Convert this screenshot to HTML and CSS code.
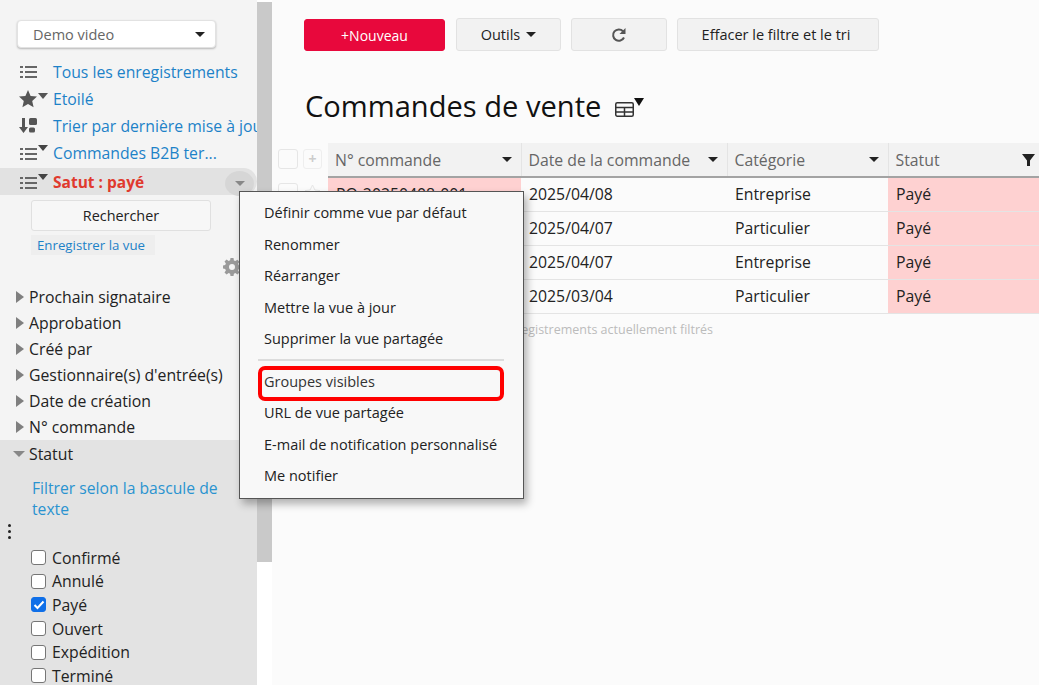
FILE: index.html
```html
<!DOCTYPE html>
<html lang="fr">
<head>
<meta charset="utf-8">
<title>Commandes de vente</title>
<link rel="stylesheet" href="styles.css">
</head>
<body>
<div class="app">
  <aside class="sidebar">
    <div class="select"><span>Demo video</span><i class="caret dark"></i></div>
    <ul class="views">
      <li class="view"><span class="vicon"><svg width="20" height="14" viewBox="0 0 20 14"><g fill="#666"><rect x="1" y="1" width="3" height="2"/><rect x="1" y="6" width="3" height="2"/><rect x="1" y="11" width="3" height="2"/><rect x="6" y="1" width="12" height="2"/><rect x="6" y="6" width="12" height="2"/><rect x="6" y="11" width="12" height="2"/></g></svg></span><a>Tous les enregistrements</a></li>
      <li class="view"><span class="vicon"><svg width="30" height="18" viewBox="0 0 30 18"><path fill="#555" d="M9 0l2.600 6 6.400.6-4.800 4.300 1.400 6.300L9 14l-5.600 3.200 1.400-6.300L0 6.600 6.400 6z"/><path fill="#555" d="M19 3h10l-5 6z"/></svg></span><a>Etoilé</a></li>
      <li class="view"><span class="vicon"><svg width="20" height="15" viewBox="0 0 20 15"><path fill="#555" d="M3 0h3v9h3l-4.500 6L0 9h3z"/><rect x="10" y="0" width="8" height="7" rx="1.500" fill="#555"/><rect x="10" y="9.500" width="6" height="5" rx="1.500" fill="#555"/></svg></span><a>Trier par dernière mise à jour</a></li>
      <li class="view"><span class="vicon"><svg width="30" height="16" viewBox="0 0 30 16"><g fill="#666"><rect x="1" y="3" width="3" height="2"/><rect x="1" y="8" width="3" height="2"/><rect x="1" y="13" width="3" height="2"/><rect x="6" y="3" width="12" height="2"/><rect x="6" y="8" width="12" height="2"/><rect x="6" y="13" width="12" height="2"/></g><path fill="#444" d="M19 0h10l-5 6z"/></svg></span><a>Commandes B2B ter...</a></li>
      <li class="view current"><span class="vicon"><svg width="30" height="16" viewBox="0 0 30 16"><g fill="#666"><rect x="1" y="3" width="3" height="2"/><rect x="1" y="8" width="3" height="2"/><rect x="1" y="13" width="3" height="2"/><rect x="6" y="3" width="12" height="2"/><rect x="6" y="8" width="12" height="2"/><rect x="6" y="13" width="12" height="2"/></g><path fill="#444" d="M19 0h10l-5 6z"/></svg></span><a>Satut : payé</a><b class="more"><i class="caret grey"></i></b></li>
    </ul>
    <button class="search">Rechercher</button>
    <div class="save-row"><a class="save">Enregistrer la vue</a></div>
    <div class="gear-row"><svg width="18" height="18" viewBox="0 0 18 18"><path fill="#9a9a9a" fill-rule="evenodd" d="M7.500 0h3l.4 2.400 1.500.7 2-1.400 2.100 2.100-1.400 2 .7 1.500L18 7.500v3l-2.200.4-.7 1.500 1.400 2-2.100 2.100-2-1.400-1.500.7-.4 2.200h-3l-.4-2.200-1.500-.7-2 1.400-2.100-2.100 1.400-2-.7-1.500L0 10.500v-3l2.200-.4.7-1.500-1.400-2 2.100-2.100 2 1.400 1.500-.7zM9 6a3 3 0 1 0 0 6 3 3 0 0 0 0-6z"/></svg></div>
    <ul class="filters">
      <li><i class="tri"></i>Prochain signataire</li>
      <li><i class="tri"></i>Approbation</li>
      <li><i class="tri"></i>Créé par</li>
      <li><i class="tri"></i>Gestionnaire(s) d'entrée(s)</li>
      <li><i class="tri"></i>Date de création</li>
      <li><i class="tri"></i>N° commande</li>
    </ul>
    <section class="open-filter">
      <div class="open-title"><i class="tri-down"></i>Statut</div>
      <a class="toggle">Filtrer selon la bascule de texte</a>
      <span class="dots"><i></i><i></i><i></i></span>
      <div class="checks">
        <label class="check"><span class="box"></span>Confirmé</label>
        <label class="check"><span class="box"></span>Annulé</label>
        <label class="check"><span class="box on"><svg width="12" height="10" viewBox="0 0 12 10"><path d="M1.500 5l3 3 6-6.500" fill="none" stroke="#fff" stroke-width="2"/></svg></span>Payé</label>
        <label class="check"><span class="box"></span>Ouvert</label>
        <label class="check"><span class="box"></span>Expédition</label>
        <label class="check"><span class="box"></span>Terminé</label>
      </div>
    </section>
  </aside>
  <div class="scrollbar"><div class="thumb"></div></div>
  <main class="main">
    <div class="toolbar">
      <button class="btn primary">+Nouveau</button>
      <button class="btn tools">Outils<i class="caret dark"></i></button>
      <button class="btn refresh"><svg width="16" height="16" viewBox="0 0 16 16"><path d="M13 10.500A5.700 5.700 0 1 1 12 4.200" fill="none" stroke="#555" stroke-width="2"/><path d="M14.500 1v6h-6z" fill="#555"/></svg></button>
      <button class="btn clear">Effacer le filtre et le tri</button>
    </div>
    <div class="heading">
      <h1>Commandes de vente</h1>
      <svg class="table-icon" width="31" height="22" viewBox="0 0 31 22"><g fill="none" stroke="#333" stroke-width="1.500"><rect x="1.750" y="5.750" width="17.500" height="13.500" rx="1.500"/><path d="M1.750 10.500h17.500M1.750 15h17.500M10.500 10.500v8.750"/></g><path fill="#111" d="M20 1h10l-5 8z"/></svg>
    </div>
    <div class="table-area">
      <div class="gutter">
        <div class="gutter-row head"><span class="gbox"></span><span class="gplus">+</span></div>
        <div class="gutter-row"><span class="gbox"></span><svg width="19" height="20" viewBox="0 0 19 20"><path d="M9.500 2l2.400 5 5.100.6-3.800 3.500 1 5-4.700-2.500-4.700 2.500 1-5L2 7.600 7.100 7z" fill="none" stroke="#e6e6e6"/></svg></div>
      </div>
      <div class="table-wrap">
        <table class="grid">
          <thead>
            <tr>
              <th class="c1"><div class="th">N° commande<i class="caret dark"></i></div></th>
              <th class="c2"><div class="th">Date de la commande<i class="caret dark"></i></div></th>
              <th class="c3"><div class="th">Catégorie<i class="caret dark"></i></div></th>
              <th class="c4"><div class="th last">Statut<svg width="13" height="12" viewBox="0 0 13 12"><path fill="#222" d="M0 0h13L8 6.500V12H5V6.500z"/></svg></div></th>
            </tr>
          </thead>
          <tbody>
            <tr><td class="pink">PO-20250408-001</td><td>2025/04/08</td><td>Entreprise</td><td class="pink">Payé</td></tr>
            <tr><td class="pink"></td><td>2025/04/07</td><td>Particulier</td><td class="pink">Payé</td></tr>
            <tr><td class="pink"></td><td>2025/04/07</td><td>Entreprise</td><td class="pink">Payé</td></tr>
            <tr><td class="pink"></td><td>2025/03/04</td><td>Particulier</td><td class="pink">Payé</td></tr>
          </tbody>
        </table>
        <p class="footnote">4 enregistrements actuellement filtrés</p>
      </div>
    </div>
  </main>
  <div class="menu">
    <ul class="menu-list">
      <li>Définir comme vue par défaut</li>
      <li>Renommer</li>
      <li>Réarranger</li>
      <li>Mettre la vue à jour</li>
      <li>Supprimer la vue partagée</li>
    </ul>
    <hr class="menu-sep">
    <ul class="menu-list">
      <li class="highlight">Groupes visibles</li>
      <li>URL de vue partagée</li>
      <li>E-mail de notification personnalisé</li>
      <li>Me notifier</li>
    </ul>
  </div>
</div>
</body>
</html>
```
FILE: styles.css
```css
* { box-sizing: border-box; }
html, body { margin: 0; padding: 0; height: 100%; overflow: hidden; }
body { font-family: "Open Sans", "Liberation Sans", sans-serif; font-size: 16px; color: #222; background: #fbfbfb; }
ul { list-style: none; margin: 0; padding: 0; }
button { font: inherit; cursor: pointer; }

.app { position: relative; display: flex; width: 1039px; height: 685px; overflow: hidden; }

.sidebar { position: relative; flex: 0 0 257px; height: 685px; background: #f4f4f4; padding-top: 20px; overflow: hidden; }
.scrollbar { flex: 0 0 15px; height: 685px; background: #fff; padding-top: 2px; }
.thumb { height: 560px; background: #c9c9c9; }

.caret { display: inline-block; width: 0; height: 0; border-left: 5.5px solid transparent; border-right: 5.5px solid transparent; border-top: 5.5px solid #222; }
.caret.grey { border-top-color: #888; }

.select { display: flex; align-items: center; justify-content: space-between; width: 199px; height: 28px; margin-left: 17px; padding: 0 10px 0 15px; background: #fff; border: 1px solid #e2e2e2; border-radius: 4px; box-shadow: 0 1px 2px rgba(0,0,0,.25); font-size: 14.500px; color: #666; }

.views { margin-top: 10px; }
.view { display: flex; align-items: center; height: 27px; padding-left: 19px; white-space: nowrap; font-size: 15.750px; }
.view a { color: #1d82c8; }
.vicon { flex: 0 0 34px; display: flex; align-items: center; }
.view.current { position: relative; height: 27px; background: #e2e2e2; margin-top: 2px; border-radius: 0 14px 14px 0; font-size: 15.500px; }
.view.current a { color: #e03a2e; font-weight: 700; }
.more { position: absolute; left: 225px; top: 3px; display: flex; align-items: center; justify-content: center; width: 29px; height: 25px; border-radius: 50%; background: #d6d6d6; }

.search { display: block; width: 180px; height: 31px; margin: 5px 0 0 31px; background: #f7f7f7; border: 1px solid #e0e0e0; border-radius: 3px; font-size: 14.400px; color: #222; }
.save-row { margin: 4px 0 0 31px; }
.save { display: block; width: 124px; height: 20px; padding-left: 6px; background: #eeeeee; color: #1d82c8; font-size: 13.250px; line-height: 20px; }

.gear-row { display: flex; justify-content: flex-end; height: 26px; padding: 3px 16px 0 0; }

.filters { margin-top: 3px; }
.filters li { display: flex; align-items: center; height: 26px; padding-left: 16px; font-size: 15.800px; color: #222; white-space: nowrap; }
.tri { display: inline-block; width: 0; height: 0; margin-right: 5px; border-top: 6px solid transparent; border-bottom: 6px solid transparent; border-left: 8px solid #7f7f7f; }
.tri-down { display: inline-block; width: 0; height: 0; margin-right: 4px; border-left: 6px solid transparent; border-right: 6px solid transparent; border-top: 6px solid #888; }

.open-filter { position: relative; height: 245px; background: #e3e3e3; }
.open-title { display: flex; align-items: center; height: 28px; padding-left: 13px; font-size: 15.800px; }
.toggle { display: block; margin: 10px 20px 0 32px; color: #2a93d0; font-size: 15.700px; line-height: 21px; }
.dots { position: absolute; left: 8px; top: 84px; display: flex; flex-direction: column; gap: 3px; }
.dots i { width: 3px; height: 3px; border-radius: 50%; background: #222; }
.checks { margin-top: 26px; padding-left: 31px; }
.check { display: flex; align-items: center; height: 23.600px; font-size: 15.800px; color: #222; }
.box { display: flex; align-items: center; justify-content: center; width: 15px; height: 15px; margin-right: 6px; background: #fff; border: 1px solid #767676; border-radius: 3px; }
.box.on { background: #0f6fe8; border-color: #0f6fe8; }

.main { flex: 1; min-width: 0; background: #fbfbfb; }
.toolbar { display: flex; gap: 10px; padding: 18px 0 0 32px; height: 52px; }
.btn { height: 33px; background: #f2f2f2; border: 1px solid #e2e2e2; border-radius: 3px; font-size: 14.500px; color: #222; padding: 0; display: flex; align-items: center; justify-content: center; }
.btn.primary { width: 141px; margin: 1px 1px 0 0; height: 32px; background: #e8083c; border-color: #e8083c; color: #fff; font-size: 14px; }
.btn.tools { width: 105px; gap: 6px; }
.btn.refresh { width: 96px; }
.btn.clear { width: 202px; padding-right: 4px; }

.heading { display: flex; align-items: center; height: 91px; padding: 17px 0 0 33px; }
h1 { margin: 0; font-size: 29.100px; font-weight: 400; color: #111; line-height: 38px; white-space: nowrap; }
.table-icon { margin-left: 13px; margin-top: 3px; }

.table-area { display: flex; }
.gutter { flex: 0 0 56px; height: 60px; overflow: hidden; }
.gutter-row { display: flex; gap: 5px; padding: 6px 0 0 6px; height: 34px; }
.gbox { width: 20px; height: 20px; border: 1px solid #e6e6e6; border-radius: 3px; background: #fbfbfb; }
.gplus { width: 19px; height: 20px; border: 1px solid #eee; border-radius: 3px; color: #ccc; font-size: 14px; line-height: 17px; text-align: center; font-weight: 700; }
.table-wrap { flex: 1; min-width: 0; overflow: hidden; }

.grid { width: 711px; table-layout: fixed; border-collapse: collapse; font-size: 15.800px; }
.c1 { width: 193px; } .c2 { width: 206px; } .c3 { width: 161px; } .c4 { width: 151px; }
th { height: 34px; padding: 0; background: #f2f2f2; border-bottom: 2px solid #a3a3a3; border-right: 1px solid #e4e4e4; font-weight: 400; color: #666; text-align: left; }
.th { display: flex; align-items: center; justify-content: space-between; padding: 0 9px 0 7px; white-space: nowrap; }
.th.last { padding-right: 4px; }
td { height: 34px; padding: 0 0 0 8px; background: #fbfbfb; border-bottom: 1px solid #e4e4e4; color: #222; white-space: nowrap; }
td.pink { background: #fed1d1; }
.footnote { margin: 7px 0 0; font-size: 12.500px; color: #bcbcbc; white-space: nowrap; padding-left: 163px; }

.menu { position: absolute; left: 239px; top: 191px; width: 285px; height: 308px; padding: 5px 19px 0 18px; background: #f8f8f8; border: 1px solid #555; box-shadow: 3px 5px 8px rgba(0,0,0,.3); font-size: 14.500px; color: #222; }
.menu-list li { height: 31.500px; line-height: 31px; padding-left: 6px; white-space: nowrap; }
.menu-sep { margin: 4px 0 5px; border: 0; border-top: 2px solid #dcdcdc; }
.menu-list .highlight { position: relative; color: #333; }
.highlight::after { content: ""; box-sizing: border-box; position: absolute; left: 0; right: 0; top: 0; height: 35px; border: 4px solid #f00; border-radius: 7px; }
```
